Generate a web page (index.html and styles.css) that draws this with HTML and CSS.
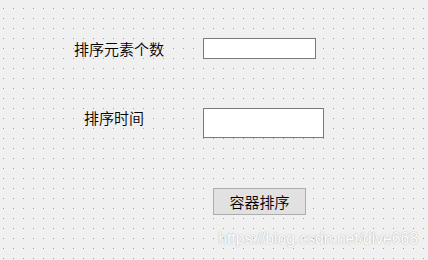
FILE: index.html
```html
<!DOCTYPE html>
<html>
  <head>
    <meta charset="UTF-8">
    <title>容器排序</title>
    <link rel="stylesheet" href="styles.css">
  </head>
  <body>
    <form class="sort-form">
      <div class="row row-count">
        <label class="label label-count" for="count">排序元素个数</label>
        <input type="text" id="count" class="field field-count">
      </div>
      <div class="row row-time">
        <label class="label label-time" for="time">排序时间</label>
        <input type="text" id="time" class="field field-time">
      </div>
      <div class="row row-button">
        <button type="button" class="sort-button">容器排序</button>
      </div>
    </form>
    <div class="watermark">https://blog.csdn.net/dive668</div>
  </body>
</html>
```

FILE: styles.css
```css
html, body {
  margin: 0;
  height: 260px;
  overflow: hidden;
}
body {
  background-color: #f0f0f0;
  background-image: conic-gradient(at 1px 1px, #f0f0f0 75%, #a0a0a0 0);
  background-size: 10px 10px;
  background-position: 3px 8px;
  font-family: "Noto Sans CJK SC", "Liberation Sans", sans-serif;
  font-size: 15px;
  font-weight: 350;
  color: #000;
}
.sort-form {
  display: flex;
  flex-direction: column;
}
.row {
  display: flex;
  align-items: center;
}
.row-count {
  margin-top: 38px;
  height: 21px;
}
.row-time {
  margin-top: 49px;
  height: 30px;
  align-items: flex-start;
}
.label {
  width: 203px;
  box-sizing: border-box;
  line-height: 21px;
}
.label-count {
  padding-left: 74px;
}
.label-time {
  padding-left: 84px;
  margin-top: -1px;
}
.field {
  box-sizing: border-box;
  border: 1px solid #7a7a7a;
  background: #fff;
  margin: 0;
  padding: 0 3px;
  outline: none;
}
.field-count {
  width: 113px;
  height: 21px;
}
.field-time {
  width: 121px;
  height: 30px;
}
.row-button {
  margin-top: 50px;
  padding-left: 213px;
}
.sort-button {
  box-sizing: border-box;
  width: 93px;
  height: 27px;
  margin: 0;
  padding: 0;
  border: 1px solid #adadad;
  background: #e1e1e1;
  font-family: "Noto Sans CJK SC", sans-serif;
  font-size: 15px;
  font-weight: 350;
  line-height: 25px;
  color: #000;
}
.watermark {
  margin-top: 14px;
  padding-right: 10px;
  text-align: right;
  font-family: "Liberation Sans", Arial, sans-serif;
  font-size: 15.7px;
  line-height: 20px;
  color: #fff;
  text-shadow: 0 0 1px #b4b4b4, 0 0 1px #b4b4b4;
}
```
